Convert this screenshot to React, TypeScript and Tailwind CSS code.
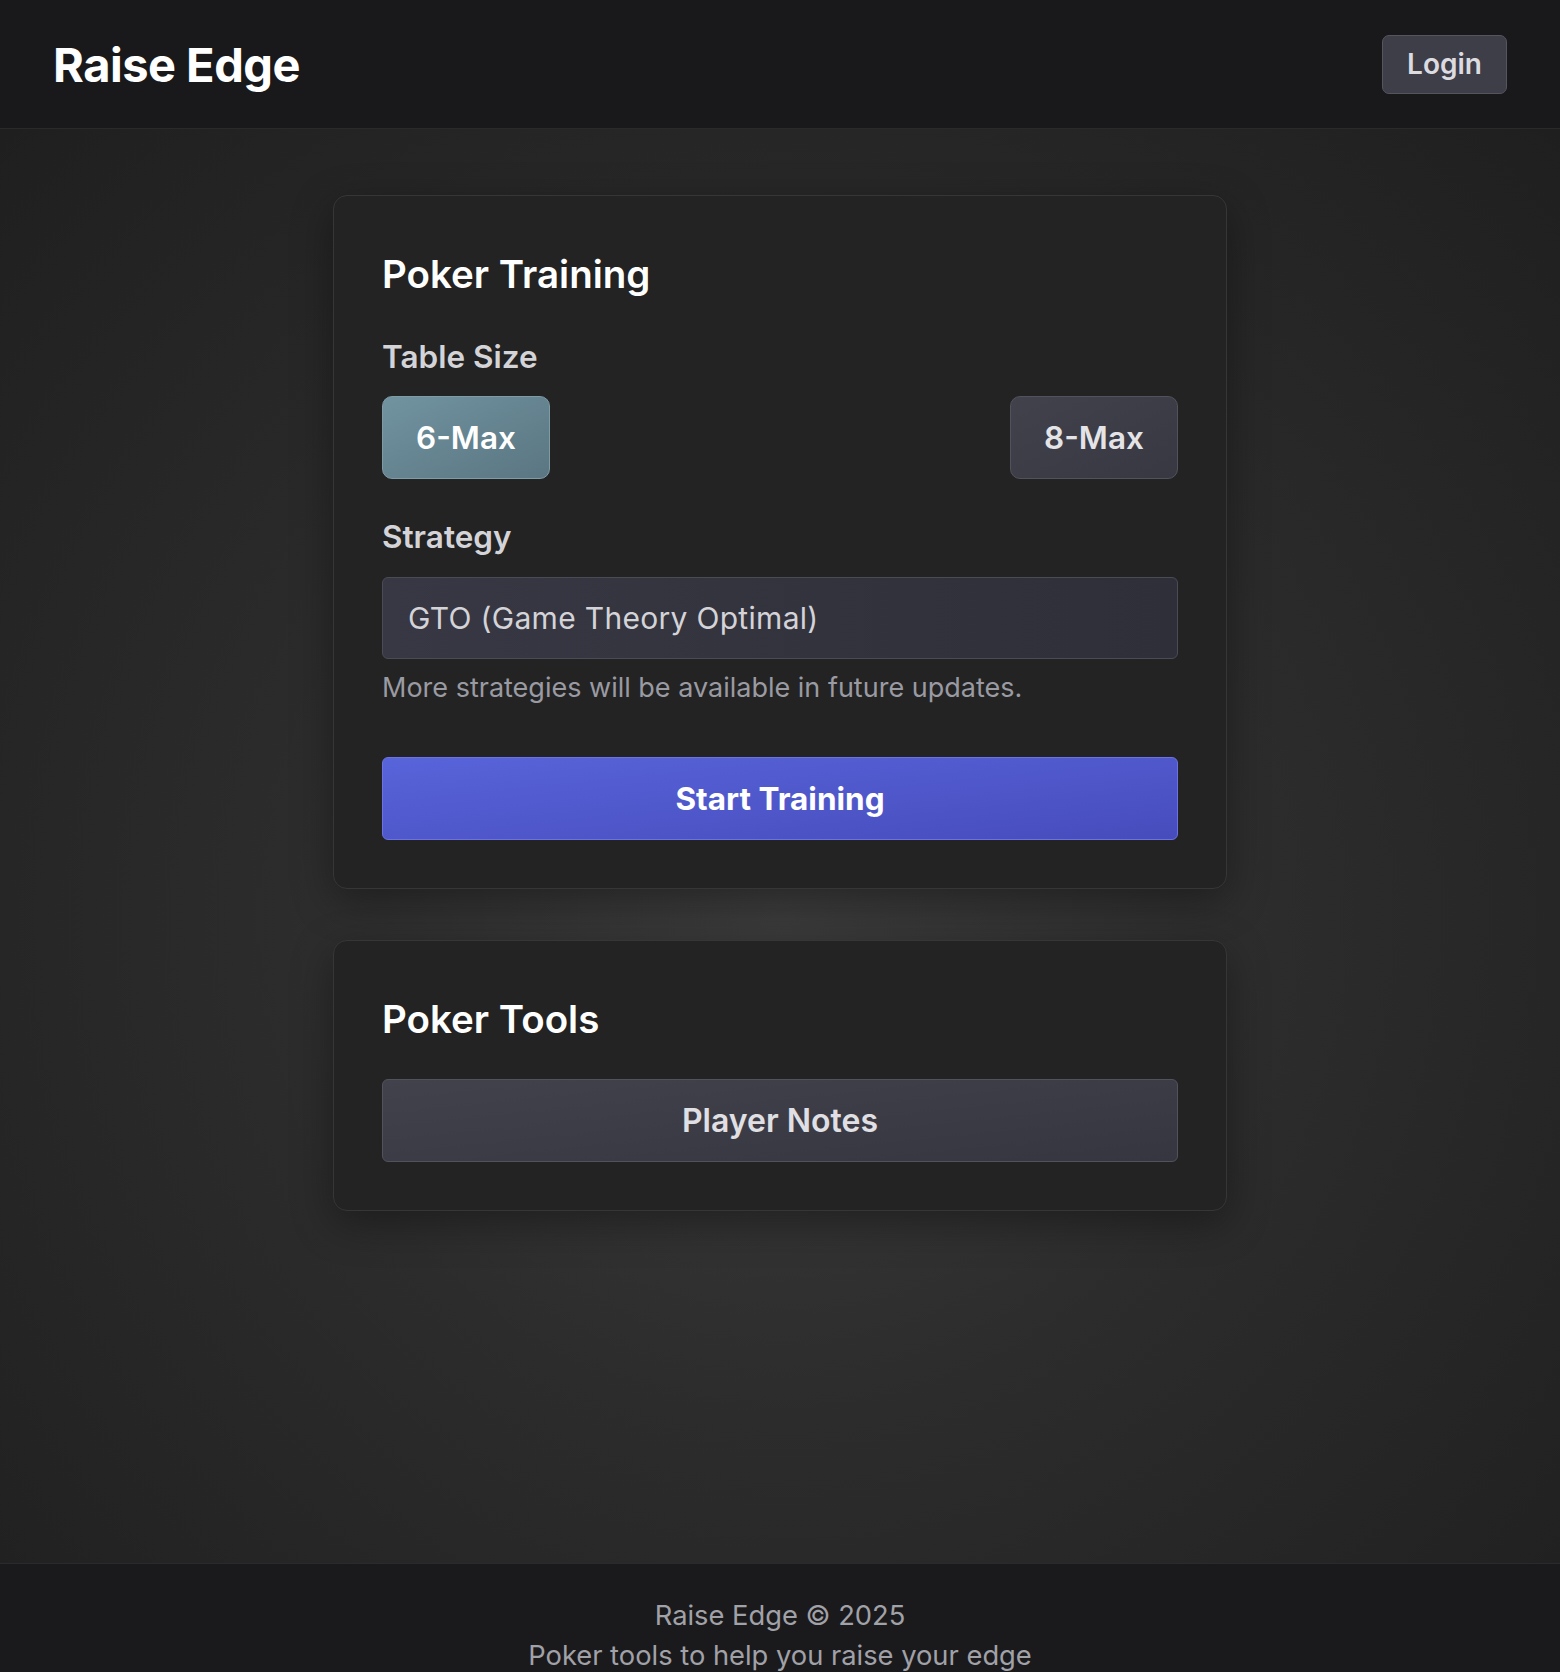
const font = { fontFamily: "Inter, 'Noto Sans', sans-serif" };

const Header = () => (
  <header className="h-[129px] flex items-center justify-between px-[53px] bg-[#19191b] border-b border-[#2a2a2d]">
    <h1 className="text-[47px] font-bold text-white tracking-[-0.5px] leading-none">
      Raise Edge
    </h1>
    <button className="w-[125px] h-[59px] rounded-[7px] bg-[#3e3e48] border-[1.5px] border-[#55555f] text-[28px] font-semibold text-[#dcdce0]">
      Login
    </button>
  </header>
);

const App = () => {
  return (
    <div style={font} className="min-h-screen flex flex-col bg-[#1e1e1e]">
      <Header />

      <main className="min-h-[1434px] px-4 pt-[66px] bg-[radial-gradient(ellipse_at_50%_55%,#3c3c3c_0%,#2c2c2c_45%,#1f1f1f_100%)]">
        <div className="max-w-[894px] mx-auto space-y-[51px]">
          {/* Training card */}
          <section className="rounded-[14px] border border-[#363636] bg-[#232323] p-12 shadow-[0_12px_40px_rgba(0,0,0,0.35)]">
            <h2 className="text-[38.5px] leading-[60px] font-semibold text-white">
              Poker Training
            </h2>
            <p className="mt-[35px] text-[31.5px] leading-[36px] font-semibold text-[#d4d4d8]">
              Table Size
            </p>
            <div className="mt-[21px] flex justify-between">
              <button className="w-[168px] h-[83px] rounded-[10px] border-[1.5px] border-[#7f9ba6] bg-gradient-to-br from-[#7193a0] to-[#5a7682] text-[31.5px] font-semibold text-white">
                6-Max
              </button>
              <button className="w-[168px] h-[83px] rounded-[10px] border-[1.5px] border-[#52525c] bg-gradient-to-br from-[#42424d] to-[#383842] text-[31.5px] font-semibold text-[#e4e4e7]">
                8-Max
              </button>
            </div>
            <p className="mt-[40px] text-[31.5px] leading-[36px] font-semibold text-[#d4d4d8]">
              Strategy
            </p>
            <div className="mt-[22px] h-[82px] flex items-center px-[25px] rounded-[6px] border-[1.5px] border-[#4b4b55] bg-gradient-to-r from-[#383844] to-[#2f2f39] text-[30px] tracking-[0.3px] text-[#d4d4d8]">
              GTO (Game Theory Optimal)
            </div>
            <p className="mt-[13px] text-[27px] leading-[32px] text-[#9a9aa2]">
              More strategies will be available in future updates.
            </p>
            <button className="mt-[53px] w-full h-[83px] rounded-[6px] border-[1.5px] border-[#6b72e3] bg-gradient-to-br from-[#5864da] to-[#474cbc] text-[31.5px] font-bold text-white">
              Start Training
            </button>
          </section>

          {/* Tools card */}
          <section className="rounded-[14px] border border-[#363636] bg-[#232323] p-12 shadow-[0_12px_40px_rgba(0,0,0,0.35)]">
            <h2 className="text-[38.5px] leading-[60px] font-semibold text-white">
              Poker Tools
            </h2>
            <button className="mt-[30px] w-full h-[83px] rounded-[6px] border-[1.5px] border-[#52525c] bg-gradient-to-br from-[#42424d] to-[#363640] text-[32px] font-semibold text-[#e0e0e4]">
              Player Notes
            </button>
          </section>
        </div>
      </main>

      <footer className="bg-[#1a1a1c] border-t border-[#2a2a2d] pt-[32px] pb-8 text-center text-[27.3px] leading-[40px] text-[#a1a1a8]">
        <p>Raise Edge © 2025</p>
        <p>Poker tools to help you raise your edge</p>
      </footer>
    </div>
  );
};

export default App;
